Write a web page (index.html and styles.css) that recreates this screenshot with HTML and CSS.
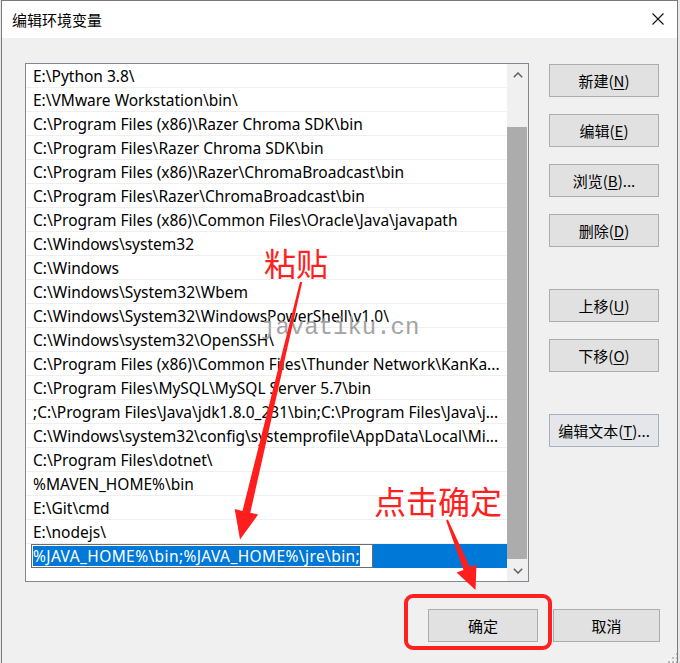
FILE: index.html
```html
<!DOCTYPE html>
<html lang="zh-CN">
<head>
<meta charset="utf-8">
<title>编辑环境变量</title>
<link rel="stylesheet" href="styles.css">
</head>
<body>
<div class="window">
  <div class="titlebar">
    <span class="title">编辑环境变量</span>
    <svg class="close" width="12" height="12" viewBox="0 0 12 12"><path d="M0.5 0.5 L11.5 11.5 M11.5 0.5 L0.5 11.5" stroke="#111" stroke-width="1.1" fill="none"/></svg>
  </div>
  <div class="content">
    <div class="main">
      <div class="listbox">
        <div class="rows">
          <div class="row">E:\Python 3.8\</div>
          <div class="row">E:\VMware Workstation\bin\</div>
          <div class="row">C:\Program Files (x86)\Razer Chroma SDK\bin</div>
          <div class="row">C:\Program Files\Razer Chroma SDK\bin</div>
          <div class="row">C:\Program Files (x86)\Razer\ChromaBroadcast\bin</div>
          <div class="row">C:\Program Files\Razer\ChromaBroadcast\bin</div>
          <div class="row">C:\Program Files (x86)\Common Files\Oracle\Java\javapath</div>
          <div class="row">C:\Windows\system32</div>
          <div class="row">C:\Windows</div>
          <div class="row">C:\Windows\System32\Wbem</div>
          <div class="row">C:\Windows\System32\WindowsPowerShell\v1.0\</div>
          <div class="row">C:\Windows\system32\OpenSSH\</div>
          <div class="row">C:\Program Files (x86)\Common Files\Thunder Network\KanKa...</div>
          <div class="row">C:\Program Files\MySQL\MySQL Server 5.7\bin</div>
          <div class="row">;C:\Program Files\Java\jdk1.8.0_231\bin;C:\Program Files\Java\j...</div>
          <div class="row">C:\Windows\system32\config\systemprofile\AppData\Local\Mi...</div>
          <div class="row">C:\Program Files\dotnet\</div>
          <div class="row">%MAVEN_HOME%\bin</div>
          <div class="row">E:\Git\cmd</div>
          <div class="row">E:\nodejs\</div>
          <div class="row selected">
            <div class="editbox"><span class="sel">%JAVA_HOME%\bin;%JAVA_HOME%\jre\bin;</span></div>
          </div>
        </div>
        <div class="scrollbar">
          <div class="sb-btn"><svg width="10" height="6" viewBox="0 0 10 6"><path d="M0.8 5.2 L5 1 L9.2 5.2" stroke="#606060" stroke-width="1.5" fill="none"/></svg></div>
          <div class="sb-track"><div class="thumb"></div></div>
          <div class="sb-btn"><svg width="10" height="6" viewBox="0 0 10 6"><path d="M0.8 0.8 L5 5 L9.2 0.8" stroke="#606060" stroke-width="1.5" fill="none"/></svg></div>
        </div>
      </div>
      <div class="side">
        <div class="group">
          <button class="btn">新建(<u>N</u>)</button>
          <button class="btn">编辑(<u>E</u>)</button>
          <button class="btn">浏览(<u>B</u>)...</button>
          <button class="btn">删除(<u>D</u>)</button>
        </div>
        <div class="group">
          <button class="btn">上移(<u>U</u>)</button>
          <button class="btn">下移(<u>O</u>)</button>
        </div>
        <div class="group">
          <button class="btn btn-hot">编辑文本(<u>T</u>)...</button>
        </div>
      </div>
    </div>
    <div class="footer">
      <button class="btn btn-ok">确定</button>
      <button class="btn btn-cancel">取消</button>
    </div>
  </div>
  <svg class="grip" width="12" height="12" viewBox="0 0 12 12">
    <rect x="9" y="1" width="2" height="2"/><rect x="5" y="5" width="2" height="2"/><rect x="9" y="5" width="2" height="2"/>
    <rect x="1" y="9" width="2" height="2"/><rect x="5" y="9" width="2" height="2"/><rect x="9" y="9" width="2" height="2"/>
  </svg>
</div>

<div class="watermark">javatiku.cn</div>
<div class="note note-paste">粘贴</div>
<div class="note note-ok">点击确定</div>
<div class="redbox"></div>
<svg class="arrows" width="680" height="663" viewBox="0 0 680 663">
  <polygon points="300,281.8 302.2,282.2 250.3,512.7 258.1,514.6 240,539.5 234.7,509 242.5,510.9" fill="#ff1e1e"/>
  <polygon points="446.1,520.4 447.9,519.6 469.9,567.3 476.5,564.5 475.5,590 456.6,572.6 463.5,569.9" fill="#ff1e1e"/>
</svg>
</body>
</html>
```

FILE: styles.css
```css
html, body {
  margin: 0;
  padding: 0;
}
body {
  position: relative;
  width: 680px;
  height: 663px;
  overflow: hidden;
  background: #e9e9e9;
  font-family: "Noto Sans", "Noto Sans CJK SC", sans-serif;
  font-size: 15px;
  color: #000;
}
.window {
  position: relative;
  box-sizing: border-box;
  width: 677px;
  height: 663px;
  margin-left: 1px;
  border-left: 1px solid #7a7a7a;
  border-right: 1px solid #7a7a7a;
  border-top: 1px solid #7a7a7a;
  background: #f0f0f0;
  overflow: hidden;
}
.titlebar {
  height: 37px;
  background: #fff;
  display: flex;
  align-items: center;
  justify-content: space-between;
  padding: 0 13px 0 10px;
}
.title {
  font-family: "Noto Sans CJK SC", sans-serif;
  font-size: 15px;
  line-height: 1;
  margin-top: -1px;
}
.close {
  display: block;
  margin-top: -2px;
}
.content {
  padding: 25px 0 0 23px;
}
.main {
  display: flex;
  align-items: flex-start;
}
.listbox {
  box-sizing: border-box;
  width: 504px;
  height: 519px;
  border: 1px solid #828790;
  background: #fff;
  display: flex;
}
.rows {
  width: 481px;
  display: flex;
  flex-direction: column;
}
.row {
  box-sizing: border-box;
  height: 24px;
  border-bottom: 1px solid #efefef;
  padding: 2px 0 0 7px;
  font-size: 15.5px;
  line-height: 21px;
  white-space: nowrap;
  overflow: hidden;
}
.row.selected {
  border-bottom: none;
  background: linear-gradient(to right, #fff 0, #fff 5px, #0078d7 5px);
  padding: 0 0 0 5px;
  display: flex;
  align-items: center;
}
.editbox {
  box-sizing: border-box;
  width: 342px;
  height: 24px;
  border: 1px solid #6d6d6d;
  background: #fff;
  padding: 1px 0 1px 1px;
  display: flex;
}
.sel {
  background: #0078d7;
  color: #fff;
  line-height: 21px;
  letter-spacing: 0.4px;
  white-space: nowrap;
}
.scrollbar {
  width: 21px;
  background: #f0f0f0;
  display: flex;
  flex-direction: column;
}
.sb-btn {
  height: 21px;
  display: flex;
  align-items: center;
  justify-content: center;
}
.sb-track {
  flex: 1;
  display: flex;
  flex-direction: column;
}
.thumb {
  margin-top: 42px;
  height: 432px;
  width: 20px;
  background: #acacac;
}
.side {
  margin-left: 20px;
  padding-top: 1px;
  display: flex;
  flex-direction: column;
  gap: 42px;
}
.group {
  display: flex;
  flex-direction: column;
  gap: 17px;
}
.btn {
  box-sizing: border-box;
  width: 110px;
  height: 33px;
  margin: 0;
  padding: 0;
  border: 1px solid #adadad;
  background: #e1e1e1;
  font-family: "Noto Sans CJK SC", sans-serif;
  font-size: 15px;
  color: #000;
  line-height: 1;
}
.btn u {
  text-decoration-thickness: 1px;
  text-underline-offset: 2px;
}
.btn-hot {
  border-color: #a3b1c1;
  background: #e4e6e9;
}
.footer {
  display: flex;
  justify-content: flex-end;
  padding-right: 17px;
  margin-top: 27px;
}
.btn-ok {
  margin-right: 15px;
}
.btn-cancel {
  width: 107px;
}
.grip {
  position: absolute;
  left: 665px;
  top: 651px;
  fill: #bdbdbd;
}
.watermark {
  position: absolute;
  left: 261px;
  top: 316px;
  font-family: "Liberation Mono", monospace;
  font-size: 24px;
  line-height: 1;
  color: #9a9a9a;
  opacity: 0.9;
}
.note {
  position: absolute;
  font-family: "Noto Sans CJK SC", sans-serif;
  font-size: 32px;
  line-height: 1;
  color: #ff2020;
}
.note-paste {
  left: 264px;
  top: 246px;
}
.note-ok {
  left: 374px;
  top: 484px;
}
.redbox {
  position: absolute;
  left: 404px;
  top: 594px;
  width: 140px;
  height: 48px;
  border: 4px solid #ff2020;
  border-radius: 9px;
}
.arrows {
  position: absolute;
  left: 0;
  top: 0;
  pointer-events: none;
}
```
